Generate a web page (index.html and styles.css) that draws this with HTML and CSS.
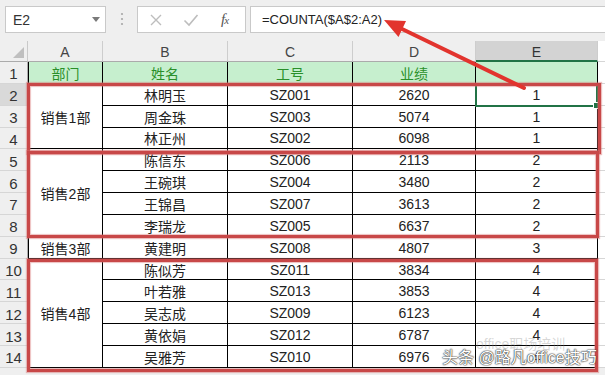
FILE: index.html
```html
<!DOCTYPE html>
<html>
<head>
<meta charset="utf-8">
<link rel="stylesheet" href="styles.css">
</head>
<body>
<div class="app">
  <div class="fbar">
    <div class="namebox"><span>E2</span><span class="dd"></span></div>
    <div class="dots">
      <svg width="31" height="27" viewBox="0 0 31 27"><circle cx="16" cy="8" r="1.1" fill="#a8a8a8"/><circle cx="16" cy="13" r="1.1" fill="#a8a8a8"/><circle cx="16" cy="18" r="1.1" fill="#a8a8a8"/></svg>
    </div>
    <div class="fxbox">
      <svg class="ico" width="14" height="14" viewBox="0 0 14 14"><path d="M2 2 L12 12 M12 2 L2 12" stroke="#bdbdbd" stroke-width="1.4" fill="none"/></svg>
      <svg class="ico" width="16" height="14" viewBox="0 0 16 14"><path d="M1.5 7.5 L6 12 L14.5 2" stroke="#bdbdbd" stroke-width="1.6" fill="none"/></svg>
      <span class="fx">f<span class="fxs">x</span></span>
    </div>
    <div class="input">=COUNTA($A$2:A2)</div>
  </div>
  <div class="sheet">
    <div class="corner"><span class="tri"></span></div>
    <div class="ch">A</div><div class="ch">B</div><div class="ch">C</div><div class="ch">D</div><div class="ch sel">E</div><div class="ch rest"></div>

    <div class="rh">1</div><div class="c hd first">部门</div><div class="c hd">姓名</div><div class="c hd">工号</div><div class="c hd">业绩</div><div class="c hd"></div><div class="rest"></div>

    <div class="rh sel">2</div><div class="c first span3">销售1部</div><div class="c">林明玉</div><div class="c">SZ001</div><div class="c">2620</div><div class="c">1</div><div class="rest"></div>
    <div class="rh">3</div><div class="c">周金珠</div><div class="c">SZ003</div><div class="c">5074</div><div class="c">1</div><div class="rest"></div>
    <div class="rh">4</div><div class="c">林正州</div><div class="c">SZ002</div><div class="c">6098</div><div class="c">1</div><div class="rest"></div>

    <div class="rh">5</div><div class="c first span4">销售2部</div><div class="c">陈信东</div><div class="c">SZ006</div><div class="c">2113</div><div class="c">2</div><div class="rest"></div>
    <div class="rh">6</div><div class="c">王碗琪</div><div class="c">SZ004</div><div class="c">3480</div><div class="c">2</div><div class="rest"></div>
    <div class="rh">7</div><div class="c">王锦昌</div><div class="c">SZ007</div><div class="c">3613</div><div class="c">2</div><div class="rest"></div>
    <div class="rh">8</div><div class="c">李瑞龙</div><div class="c">SZ005</div><div class="c">6637</div><div class="c">2</div><div class="rest"></div>

    <div class="rh">9</div><div class="c first">销售3部</div><div class="c">黄建明</div><div class="c">SZ008</div><div class="c">4807</div><div class="c">3</div><div class="rest"></div>

    <div class="rh">10</div><div class="c first span5">销售4部</div><div class="c">陈似芳</div><div class="c">SZ011</div><div class="c">3834</div><div class="c">4</div><div class="rest"></div>
    <div class="rh">11</div><div class="c">叶若雅</div><div class="c">SZ013</div><div class="c">3853</div><div class="c">4</div><div class="rest"></div>
    <div class="rh">12</div><div class="c">吴志成</div><div class="c">SZ009</div><div class="c">6123</div><div class="c">4</div><div class="rest"></div>
    <div class="rh">13</div><div class="c">黄依娟</div><div class="c">SZ012</div><div class="c">6787</div><div class="c">4</div><div class="rest"></div>
    <div class="rh">14</div><div class="c">吴雅芳</div><div class="c">SZ010</div><div class="c">6976</div><div class="c">4</div><div class="rest"></div>
  </div>

  <div class="selbox"><span class="handle"></span></div>
  <div class="rbox rb1"></div>
  <div class="rbox rb2"></div>
  <div class="rbox rb4"></div>

  <svg class="arrow" width="605" height="375" viewBox="0 0 605 375">
    <line x1="524" y1="88" x2="400" y2="28" stroke="#e2342e" stroke-width="4" stroke-linecap="round"/>
    <polygon points="384,20 406,21 398.5,37" fill="#e2342e"/>
  </svg>

  <div class="wm-back">office职场培训</div>
  <div class="wm">头条 @路凡office技巧</div>
</div>
</body>
</html>
```

FILE: styles.css
```css
html, body {
  margin: 0;
  padding: 0;
}
body {
  font-family: "Liberation Sans", "Noto Sans CJK SC", sans-serif;
  background: #fff;
}
.app {
  position: relative;
  width: 605px;
  height: 375px;
  overflow: hidden;
  background: #efefef;
}
.fbar {
  height: 41px;
  box-sizing: border-box;
  padding-top: 6px;
  display: flex;
  align-items: flex-start;
}
.namebox {
  margin-left: 5px;
  width: 101px;
  height: 27px;
  box-sizing: border-box;
  background: #fff;
  border: 1px solid #c9c9c9;
  display: flex;
  align-items: center;
  padding-left: 7px;
  font-size: 14px;
  color: #333;
}
.dd {
  margin-left: auto;
  margin-right: 5px;
  width: 0;
  height: 0;
  border-left: 4px solid transparent;
  border-right: 4px solid transparent;
  border-top: 5px solid #7a7a7a;
}
.dots {
  width: 31px;
  height: 27px;
}
.dots svg { display: block; }
.fxbox {
  width: 109px;
  height: 27px;
  box-sizing: border-box;
  background: #fff;
  border: 1px solid #c9c9c9;
  display: flex;
  align-items: center;
  padding-left: 11px;
}
.fxbox .ico { display: block; }
.fxbox .ico:nth-child(2) { margin-left: 20px; }
.fx {
  margin-left: 22px;
  font-family: "Liberation Serif", serif;
  font-style: italic;
  font-size: 15px;
  color: #555;
  letter-spacing: -1px;
}
.fxs { font-size: 11px; }
.input {
  margin-left: 4px;
  flex: 1;
  height: 27px;
  box-sizing: border-box;
  background: #fff;
  border: 1px solid #c9c9c9;
  border-right: none;
  padding-left: 11px;
  display: flex;
  align-items: center;
  font-size: 13px;
  color: #222;
}
.sheet {
  display: grid;
  grid-template-columns: 28px 75px 125px 125px 123px 122px 1fr;
  grid-template-rows: 21px repeat(14, 21.857px);
  background: #fff;
}
.corner {
  background: #efefef;
  border-right: 1px solid #c9c9c9;
  border-bottom: 1px solid #ababab;
  position: relative;
}
.tri {
  position: absolute;
  right: 3px;
  bottom: 3px;
  width: 0;
  height: 0;
  border-left: 11px solid transparent;
  border-bottom: 11px solid #bfbfbf;
}
.ch {
  background: #efefef;
  border-right: 1px solid #cdcdcd;
  border-bottom: 1px solid #ababab;
  display: flex;
  align-items: center;
  justify-content: center;
  font-size: 14px;
  color: #444;
  padding-top: 2px;
  box-sizing: border-box;
}
.ch.sel {
  background: #d3d3d3;
  border-bottom: 2px solid #217346;
  color: #333;
}
.ch.rest { border-right: none; }
.rh {
  background: #efefef;
  border-right: 1px solid #ababab;
  border-bottom: 1px solid #d6d6d6;
  display: flex;
  align-items: center;
  justify-content: center;
  font-size: 15px;
  color: #333;
  padding-top: 3px;
  box-sizing: border-box;
}
.rh.sel { background: #d9d9d9; }
.c {
  border-right: 1px solid #000;
  border-bottom: 1px solid #000;
  display: flex;
  align-items: center;
  justify-content: center;
  font-size: 14px;
  color: #222;
  background: #fff;
  box-sizing: border-box;
  padding-top: 1px;
}
.c.first { border-left: 1px solid #000; }
.c.hd {
  background: #c6efce;
  color: #2a8f2a;
}
.span3 { grid-row: span 3; }
.span4 { grid-row: span 4; }
.span5 { grid-row: span 5; }
.rest {
  background: #fff;
  border-bottom: 1px solid #d6d6d6;
}
.selbox {
  position: absolute;
  left: 475px;
  top: 83px;
  width: 123px;
  height: 24px;
  box-sizing: border-box;
  border: 2px solid #217346;
}
.handle {
  position: absolute;
  right: -4px;
  bottom: -4px;
  width: 5px;
  height: 5px;
  background: #217346;
  border: 1px solid #fff;
}
.rbox {
  position: absolute;
  box-sizing: border-box;
  border: 3px solid #c84848;
  box-shadow: 0 0 1px 1px rgba(214, 110, 110, 0.45), inset 0 0 1px 1px rgba(214, 110, 110, 0.45);
}
.rb1 { left: 27px; top: 83px; width: 574px; height: 71px; }
.rb2 { left: 27px; top: 151px; width: 572px; height: 87px; }
.rb4 { left: 27px; top: 259px; width: 571px; height: 113px; }
.arrow {
  position: absolute;
  left: 0;
  top: 0;
  pointer-events: none;
}
.wm-back {
  position: absolute;
  left: 476px;
  top: 333px;
  font-size: 14px;
  color: rgba(140, 140, 140, 0.35);
}
.wm {
  position: absolute;
  left: 442px;
  top: 344px;
  font-size: 16px;
  color: #fff;
  white-space: nowrap;
  text-shadow: 0 0 1px #333, 0 0 1px #333, 0 0 2px #555;
}
```
